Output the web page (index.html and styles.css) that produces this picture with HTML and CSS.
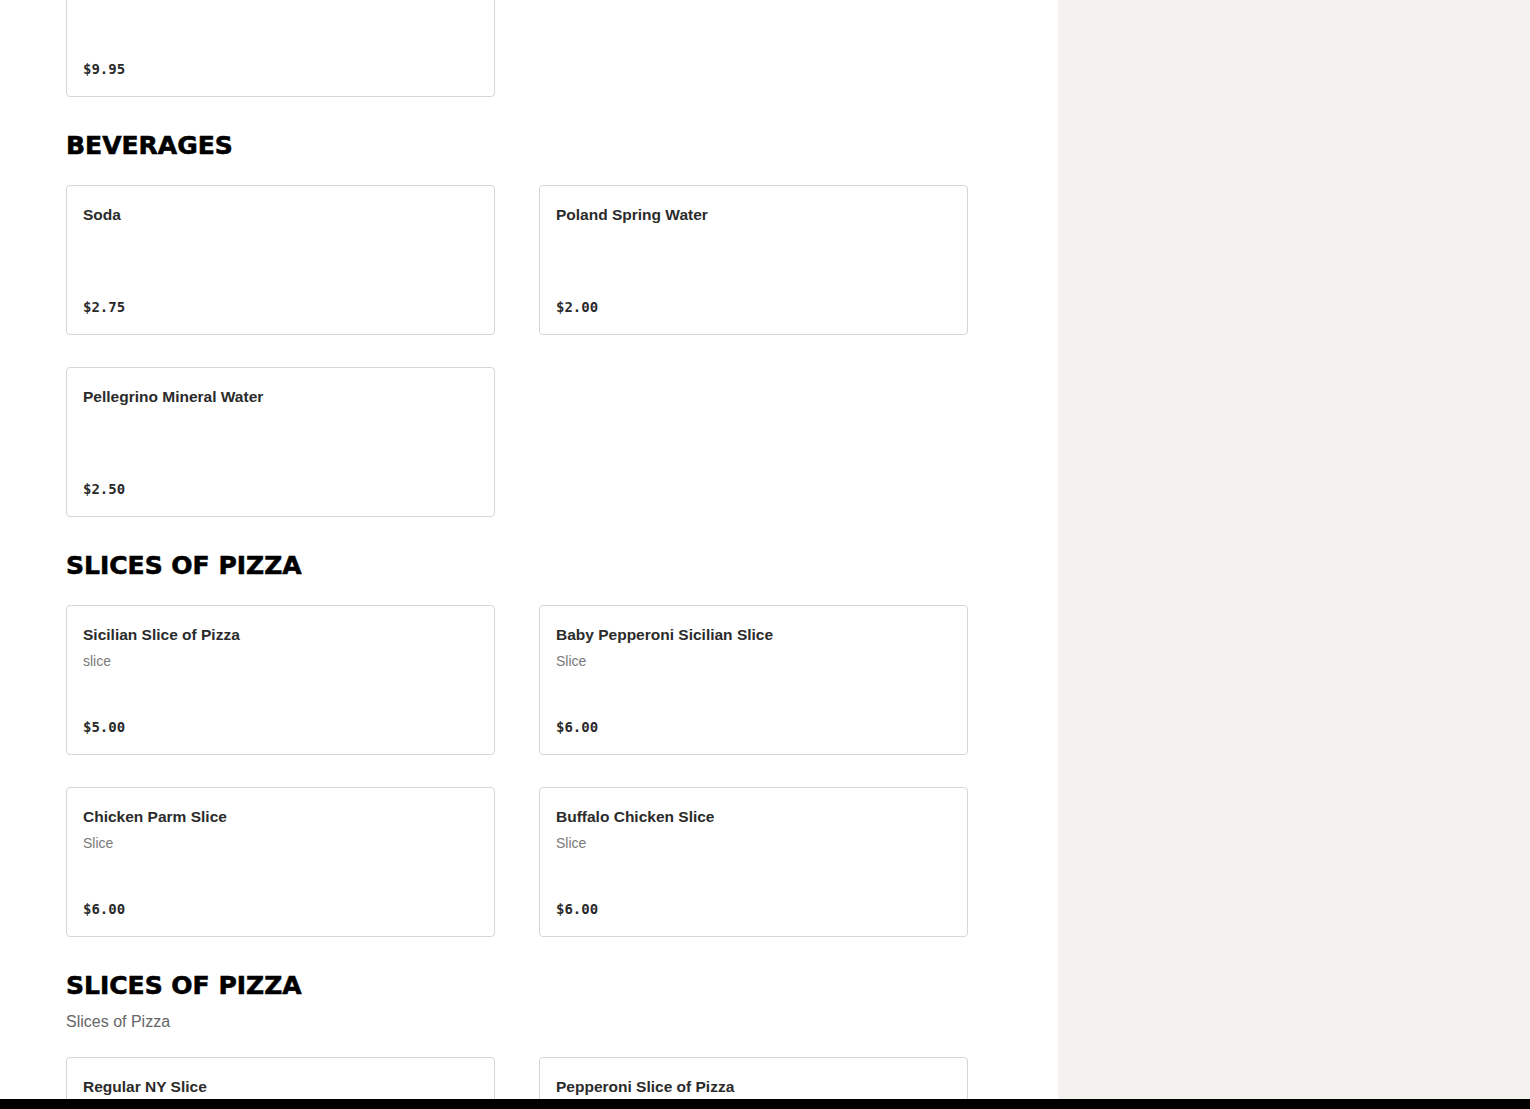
FILE: index.html
```html
<!DOCTYPE html>
<html lang="en">
<head>
<meta charset="utf-8">
<title>Menu</title>
<link rel="stylesheet" href="styles.css">
</head>
<body>
<div class="page">
  <main class="menu">
    <div class="grid grid-first">
      <div class="card card-partial">
        <div class="price">$9.95</div>
      </div>
    </div>

    <section class="section">
      <h2 class="section-title">BEVERAGES</h2>
      <div class="grid">
        <div class="card"><div class="name">Soda</div><div class="price">$2.75</div></div>
        <div class="card"><div class="name">Poland Spring Water</div><div class="price">$2.00</div></div>
        <div class="card"><div class="name">Pellegrino Mineral Water</div><div class="price">$2.50</div></div>
      </div>
    </section>

    <section class="section">
      <h2 class="section-title">SLICES OF PIZZA</h2>
      <div class="grid">
        <div class="card"><div class="name">Sicilian Slice of Pizza</div><div class="desc">slice</div><div class="price">$5.00</div></div>
        <div class="card"><div class="name">Baby Pepperoni Sicilian Slice</div><div class="desc">Slice</div><div class="price">$6.00</div></div>
        <div class="card"><div class="name">Chicken Parm Slice</div><div class="desc">Slice</div><div class="price">$6.00</div></div>
        <div class="card"><div class="name">Buffalo Chicken Slice</div><div class="desc">Slice</div><div class="price">$6.00</div></div>
      </div>
    </section>

    <section class="section">
      <h2 class="section-title">SLICES OF PIZZA</h2>
      <p class="section-desc">Slices of Pizza</p>
      <div class="grid">
        <div class="card"><div class="name">Regular NY Slice</div><div class="price">$3.50</div></div>
        <div class="card"><div class="name">Pepperoni Slice of Pizza</div><div class="price">$4.50</div></div>
      </div>
    </section>
  </main>
  <aside class="side"></aside>
</div>
<div class="bottom-bar"></div>
</body>
</html>
```

FILE: styles.css
```css
* { box-sizing: border-box; }
html, body { margin: 0; padding: 0; }
body {
  font-family: "Liberation Sans", Arial, sans-serif;
  color: #2b2b2b;
  background: #ffffff;
  overflow: hidden;
  height: 1109px;
}
.page {
  display: flex;
  height: 1109px;
  overflow: hidden;
}
.menu {
  width: 1058px;
  flex: 0 0 1058px;
  background: #ffffff;
  padding: 0 90px 0 66px;
  margin-top: -53px;
}
.side {
  flex: 1;
  background: #f3f2ee;
}
.grid {
  display: grid;
  grid-template-columns: 429px 429px;
  column-gap: 44px;
  row-gap: 32px;
}
.card {
  border: 1px solid #d6d6d6;
  border-radius: 4px;
  min-height: 150px;
  padding: 17px 16px 16px;
  display: flex;
  flex-direction: column;
  background: #fff;
}
.name {
  font-size: 15.5px;
  line-height: 24px;
  font-weight: 700;
  color: #2b2b2b;
}
.desc {
  font-size: 14px;
  line-height: 20px;
  margin-top: 4px;
  color: #7a7a7a;
}
.price {
  margin-top: auto;
  font-family: "DejaVu Sans Mono", "Liberation Mono", monospace;
  font-size: 14px;
  line-height: 22px;
  font-weight: 700;
  color: #2a2a2a;
}
.section { margin-top: 32px; }
.section-title {
  margin: 0 0 24px;
  padding-top: 1px;
  height: 32px;
  font-family: "DejaVu Sans", sans-serif;
  font-weight: 700;
  font-size: 25px;
  line-height: 32px;
  color: #000;
  -webkit-text-stroke: 0.6px #000;
}
.section-desc {
  margin: -15px 0 23px;
  font-size: 16px;
  line-height: 24px;
  color: #666;
}
.bottom-bar {
  position: fixed;
  left: 0;
  right: 0;
  bottom: 0;
  height: 10px;
  background: #000;
}
```
